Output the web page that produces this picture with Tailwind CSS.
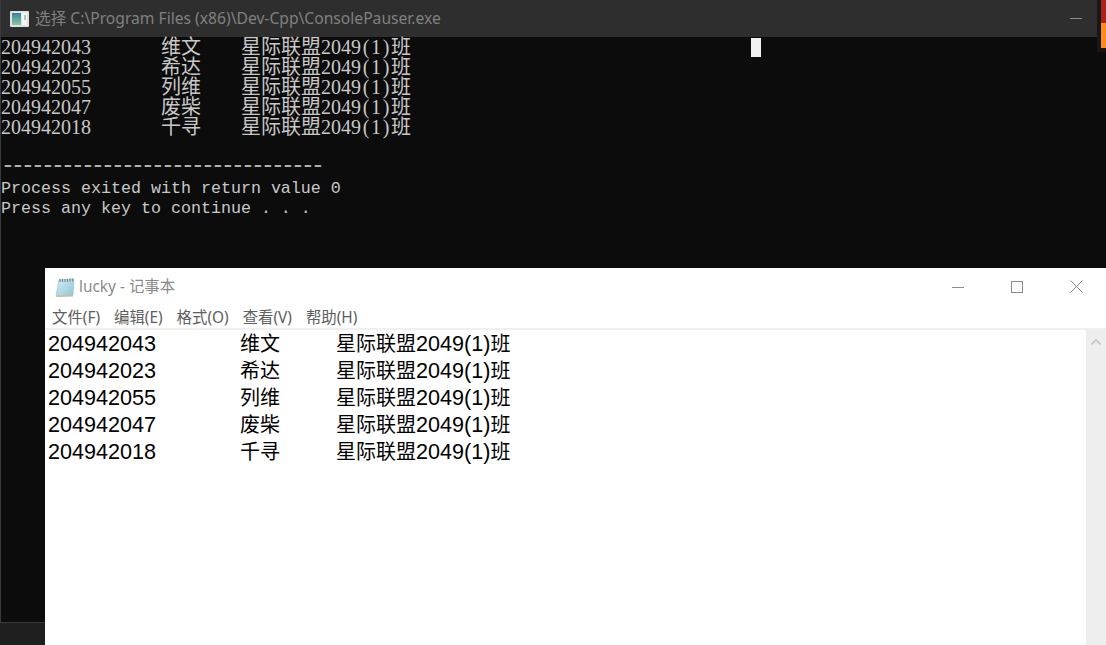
<!DOCTYPE html>
<html lang="zh-CN">
<head>
  <meta charset="UTF-8" />
  <title>lucky - 记事本</title>
  <script src="https://cdn.jsdelivr.net/npm/@tailwindcss/browser@4"></script>
</head>
<body class="relative w-[1106px] h-[645px] overflow-hidden bg-[#1f1f1f]">

  <!-- console window -->
  <div class="absolute left-0 top-0 w-[1106px] h-[623px] flex flex-col bg-[#0c0c0c] border-l border-b border-[#3a3a3a]">
    <div class="h-[37px] shrink-0 bg-[#2e2e2e] flex items-center pl-[9px] pr-[24px] font-['Noto_Sans','Noto_Sans_CJK_SC',sans-serif] text-[15.65px] text-[#808080]">
      <svg width="19" height="16" viewBox="0 0 19 16" class="shrink-0">
        <defs>
          <linearGradient id="consolePanel" x1="0" y1="0" x2="0" y2="1">
            <stop offset="0" stop-color="#3d7f9c" />
            <stop offset="1" stop-color="#86c9a2" />
          </linearGradient>
        </defs>
        <rect width="19" height="16" rx="1" fill="#dfe3e4" />
        <rect x="2" y="2" width="9" height="12" fill="url(#consolePanel)" />
        <rect x="12" y="2" width="5" height="12" fill="#f3f6f4" />
        <rect x="14" y="4" width="2" height="5" fill="#a9c9b4" />
      </svg>
      <span class="ml-[6px] whitespace-nowrap">选择 C:\Program Files (x86)\Dev-Cpp\ConsolePauser.exe</span>
      <span class="ml-auto w-[12px] h-px bg-[#8c8c8c]"></span>
    </div>

    <div class="relative font-['Liberation_Mono','Noto_Sans_CJK_SC',monospace] text-[16.67px] leading-[20px] text-[#c8c8c8] whitespace-nowrap">
      <div id="consoleRows"></div>
      <div class="h-[20px]"></div>
      <div class="h-[18px] mb-[4px] leading-[18px] text-[23px] tracking-[-3.8px] text-[#b4b4b4]">--------------------------------</div>
      <div class="h-[20px]">Process exited with return value 0</div>
      <div class="h-[20px]">Press any key to continue . . .</div>
      <span class="absolute left-[750px] top-[1px] w-[10px] h-[19px] bg-[#f2f2f2]"></span>
    </div>
  </div>

  <!-- thumbnail peeking out at the top right -->
  <div class="absolute left-[1097px] top-0 w-[9px] h-[52px] bg-[#171717]">
    <div class="ml-[4px] w-[5px] h-[23px] bg-[#a8231c]"></div>
    <div class="ml-[4px] w-[5px] h-[25px] bg-[#ff8a1f]"></div>
  </div>

  <!-- notepad window -->
  <div class="absolute left-[45px] top-[268px] w-[1061px] h-[377px] flex flex-col bg-white">
    <div class="h-[37px] shrink-0 flex items-center pl-[10px] font-['Noto_Sans','Noto_Sans_CJK_SC',sans-serif] text-[15.4px] text-[#8a8a8a]">
      <svg width="20" height="20" viewBox="0 0 20 20" class="shrink-0">
        <defs>
          <linearGradient id="notePage" x1="0" y1="0" x2="1" y2="1">
            <stop offset="0" stop-color="#d5eef5" />
            <stop offset="1" stop-color="#8cc6d6" />
          </linearGradient>
        </defs>
        <path d="M4 3 L19 2 L18 18 L1 19 Z" fill="url(#notePage)" stroke="#a3c6cf" stroke-width="0.8" />
        <path d="M5 2 V5 M7.5 2 V5 M10 2 V5 M12.5 2 V5 M15 1.5 V4.5 M17.5 1.5 V4.5" stroke="#7d8b90" stroke-width="1.2" />
        <path d="M1 19 L18 18 L18 19.5 L2 20 Z" fill="#c9b98f" />
      </svg>
      <span class="ml-[4px]">lucky - 记事本</span>
      <div class="ml-auto flex items-center">
        <svg width="12" height="12" viewBox="0 0 12 12" class="mr-[47px]"><path d="M0 6.5 H12" stroke="#8c8c8c" /></svg>
        <svg width="12" height="12" viewBox="0 0 12 12" class="mr-[47px]"><rect x="0.5" y="0.5" width="11" height="11" fill="none" stroke="#8c8c8c" /></svg>
        <svg width="13" height="13" viewBox="0 0 13 13" class="mr-[23px]"><path d="M0.5 0.5 L12.5 12.5 M12.5 0.5 L0.5 12.5" stroke="#8c8c8c" /></svg>
      </div>
    </div>

    <div class="h-[23px] pt-[3px] shrink-0 flex items-center pl-[7px] gap-[14px] font-['Noto_Sans','Noto_Sans_CJK_SC',sans-serif] text-[15.4px] text-[#5e5e5e]">
      <span>文件(F)</span>
      <span>编辑(E)</span>
      <span>格式(O)</span>
      <span>查看(V)</span>
      <span>帮助(H)</span>
    </div>

    <div class="flex-1 flex border-t-2 border-[#f0f0f0] min-h-0">
      <div id="noteRows" class="flex-1 pl-[3px] font-['Liberation_Sans','Noto_Sans_CJK_SC',sans-serif] text-[21.6px] leading-[27px] text-black whitespace-nowrap"></div>
      <div class="w-[20px] shrink-0 bg-[#eeeeee] pt-[9px] flex justify-center">
        <svg width="10" height="6" viewBox="0 0 10 6" class="block"><path d="M0.5 5.5 L5 1 L9.5 5.5" fill="none" stroke="#c4c4c4" stroke-width="1.6" /></svg>
      </div>
    </div>
  </div>

  <script>
    const students = [
      ["204942043", "维文"],
      ["204942023", "希达"],
      ["204942055", "列维"],
      ["204942047", "废柴"],
      ["204942018", "千寻"]
    ];

    // console cells are 10px wide, so each paren gets its own cell
    const cell = (c) => `<span class="inline-block w-[10px] text-center">${c}</span>`;

    document.getElementById("consoleRows").innerHTML = students.map(([id, name]) => `
      <div class="flex items-baseline h-[20px] font-['Liberation_Serif','Noto_Sans_CJK_SC',serif] text-[20px]">
        <span class="w-[160px]">${id}</span>
        <span class="w-[80px]">${name}</span>
        <span>星际联盟2049${cell("(")}${cell("1")}${cell(")")}班</span>
      </div>`).join("");

    document.getElementById("noteRows").innerHTML = students.map(([id, name]) => `
      <div class="flex items-baseline h-[27px]">
        <span class="w-[192px]">${id}</span>
        <span class="w-[96px] text-[20px]">${name}</span>
        <span><span class="text-[20px]">星际联盟</span>2049(1)<span class="text-[20px]">班</span></span>
      </div>`).join("");
  </script>
</body>
</html>
